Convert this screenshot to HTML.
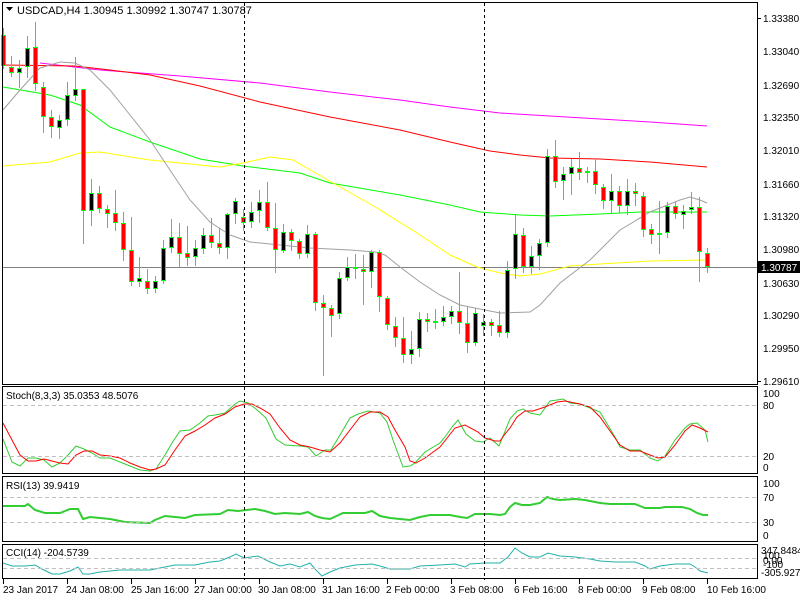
<!DOCTYPE html>
<html><head><meta charset="utf-8"><style>
html,body{margin:0;padding:0;background:#fff;width:800px;height:600px;overflow:hidden}
svg{display:block}
text{font-family:"Liberation Sans",sans-serif;font-size:10px;fill:#000}
</style></head><body>
<svg id="s" width="800" height="600" viewBox="0 0 800 600" xmlns="http://www.w3.org/2000/svg">
<rect width="800" height="600" fill="#fff"/>
<g id="g"></g>
<!-- panel borders -->
<g fill="none" stroke="#000" stroke-width="1">
<rect x="2.5" y="2.5" width="755" height="382"/>
<rect x="2.5" y="386.5" width="755" height="87"/>
<rect x="2.5" y="476.5" width="755" height="65"/>
<rect x="2.5" y="544.5" width="755" height="34"/>
</g>
<!-- dashed levels -->
<g stroke="#c0c0c0" stroke-dasharray="4,3" stroke-width="1">
<line x1="3" y1="405.5" x2="757" y2="405.5"/><line x1="3" y1="456.5" x2="757" y2="456.5"/>
<line x1="3" y1="497.5" x2="757" y2="497.5"/><line x1="3" y1="522.5" x2="757" y2="522.5"/>
<line x1="3" y1="558.5" x2="757" y2="558.5"/><line x1="3" y1="568.5" x2="757" y2="568.5"/>
</g>
<!-- vertical separators -->
<g stroke="#000" stroke-dasharray="3,3" stroke-width="1">
<line x1="244.5" y1="3" x2="244.5" y2="580"/><line x1="484.5" y1="3" x2="484.5" y2="580"/>
</g>
<!-- right axis labels -->
<g>
<text x="763" y="22">1.33380</text><text x="763" y="55">1.33040</text><text x="763" y="89">1.32690</text>
<text x="763" y="121">1.32350</text><text x="763" y="154">1.32010</text><text x="763" y="188">1.31660</text>
<text x="763" y="220">1.31320</text><text x="763" y="253">1.30980</text><text x="763" y="287">1.30630</text>
<text x="763" y="319">1.30290</text><text x="763" y="352">1.29950</text><text x="763" y="385">1.29610</text>
<text x="763" y="397">100</text><text x="763" y="409">80</text><text x="763" y="460">20</text><text x="763" y="471">0</text>
<text x="763" y="487">100</text><text x="763" y="501">70</text><text x="763" y="526">30</text><text x="763" y="539">0</text>
<text x="761" y="554">347.8484</text><text x="763" y="559">100</text><text x="763" y="564">0.00</text><text x="763" y="568">-100</text><text x="761" y="576">-305.9279</text>
</g>
<g stroke="#000"><line x1="757" y1="18.5" x2="761" y2="18.5"/><line x1="757" y1="381.5" x2="761" y2="381.5"/></g>
<rect x="758" y="261" width="42" height="12" fill="#000"/>
<text x="761" y="271" style="fill:#fff">1.30787</text>
<!-- bottom axis -->
<g stroke="#000"><line x1="3.5" y1="579" x2="3.5" y2="584"/><line x1="67.5" y1="579" x2="67.5" y2="584"/><line x1="131.5" y1="579" x2="131.5" y2="584"/><line x1="195.5" y1="579" x2="195.5" y2="584"/><line x1="259.5" y1="579" x2="259.5" y2="584"/><line x1="323.5" y1="579" x2="323.5" y2="584"/><line x1="387.5" y1="579" x2="387.5" y2="584"/><line x1="451.5" y1="579" x2="451.5" y2="584"/><line x1="515.5" y1="579" x2="515.5" y2="584"/><line x1="579.5" y1="579" x2="579.5" y2="584"/><line x1="643.5" y1="579" x2="643.5" y2="584"/><line x1="707.5" y1="579" x2="707.5" y2="584"/></g>
<g>
<text x="3" y="593">23 Jan 2017</text><text x="66" y="593">24 Jan 08:00</text><text x="131" y="593">25 Jan 16:00</text>
<text x="194" y="593">27 Jan 00:00</text><text x="258" y="593">30 Jan 08:00</text><text x="322" y="593">31 Jan 16:00</text>
<text x="386" y="593">2 Feb 00:00</text><text x="450" y="593">3 Feb 08:00</text><text x="514" y="593">6 Feb 16:00</text>
<text x="578" y="593">8 Feb 00:00</text><text x="642" y="593">9 Feb 08:00</text><text x="707" y="593">10 Feb 16:00</text>
</g>
<!-- titles -->
<polygon points="6,7 13,7 9.5,11" fill="#000"/>
<text x="17" y="14" style="font-size:11px">USDCAD,H4  1.30945 1.30992 1.30747 1.30787</text>
<text x="6" y="399" style="font-size:10px">Stoch(8,3,3) 35.0353 48.5076</text>
<text x="6" y="489" style="font-size:10px">RSI(13) 39.9419</text>
<text x="6" y="556" style="font-size:10px">CCI(14) -204.5739</text>
</svg>
<script>
var g=document.getElementById('g'),NS='http://www.w3.org/2000/svg';
function pl(pts,col,w){var p=document.createElementNS(NS,'polyline');p.setAttribute('points',pts.map(function(a){return a.join(',')}).join(' '));p.setAttribute('fill','none');p.setAttribute('stroke',col);p.setAttribute('stroke-width',w);g.appendChild(p);}
function el(n,a){var e=document.createElementNS(NS,n);for(var k in a)e.setAttribute(k,a[k]);g.appendChild(e);return e;}
el('line',{x1:3,y1:267.5,x2:757,y2:267.5,stroke:'#808080','stroke-width':1});
pl([[40,63],[100,70],[180,76],[260,83],[330,92],[400,100],[450,107],[500,113],[550,116],[600,119],[650,122],[707,126]],'#ff00ff',1);
pl([[3,65],[75,66],[110,70],[150,75],[200,86],[260,102],[330,117],[400,130],[450,142],[490,151],[520,155],[550,158],[600,159],[650,162],[707,167]],'#ff0000',1);
pl([[3,87],[50,95],[80,105],[110,127],[150,142],[200,159],[243,166],[300,173],[330,183],[400,195],[450,205],[480,212],[520,215],[550,216],[600,214],[640,212],[707,212]],'#00ff00',1);
pl([[3,166],[50,162],[80,153],[100,152],[150,160],[220,167],[243,163],[270,157],[293,160],[333,183],[377,208],[417,233],[450,255],[477,267],[500,273],[520,276],[540,274],[570,266],[600,264],[650,261],[707,260]],'#ffff00',1);
pl([[3,110],[20,90],[40,68],[60,62],[75,63],[90,70],[110,90],[130,115],[150,140],[170,170],[190,200],[210,222],[230,235],[250,242],[280,245],[310,248],[350,250],[375,252],[385,255],[400,267],[420,282],[440,295],[460,305],[480,309],[500,313],[530,312],[540,305],[560,283],[590,260],[620,230],[650,212],[680,200],[690,197],[700,200],[707,203]],'#a0a0a0',1);
var C=[['r',35,66,28,68],['r',67,73,56,76],['b',68,73,60,87],['b',48,67,36,77],['r',47,84,22,90],['r',87,117,82,132],['r',117,127,110,137],['b',120,128,115,138],['b',95,120,82,125],['b',89,96,57,100],
['r',89,211,89,243],['b',193,211,179,225],['r',193,209,186,212],['r',209,214,205,227],['r',213,223,190,230],['r',223,250,212,260],['r',250,282,217,285],['b',278,282,257,286],['r',281,289,269,293],['b',281,289,276,292],
['b',248,281,240,283],['b',237,248,219,252],['r',237,254,223,267],['r',253,258,226,265],['b',248,257,240,265],['b',235,249,228,253],['r',235,243,218,247],['r',243,248,228,253],['b',214,248,213,258],['b',201,214,198,223],
['r',217,223,209,230],['b',212,222,202,227],['b',202,211,190,222],['r',202,228,182,230],['r',228,250,203,272],['b',232,251,224,252],['r',232,241,229,250],['r',241,254,239,258],['b',234,254,225,257],['r',234,303,232,310],
['r',303,308,295,375],['r',308,316,305,336],['b',278,314,272,318],['b',267,278,257,280],['r',267,269,254,278],['r',269,272,255,304],['b',252,272,250,287],['r',252,297,250,311],['r',298,325,296,329],['r',326,338,317,346],
['r',338,355,317,362],['b',349,355,331,363],['b',319,349,312,356],['r',319,322,313,331],['b',321,322,309,328],['b',317,322,306,325],['b',311,317,306,323],['r',311,323,272,333],['r',323,343,307,352],['b',313,343,308,345],
['b',322,326,314,335],['r',322,326,319,335],['r',325,333,311,336],['b',270,333,261,337],['b',234,269,214,278],['r',235,267,228,272],['b',256,267,246,273],['b',243,256,239,269],['b',156,243,149,246],['r',156,182,140,187],
['b',174,181,167,199],['b',167,174,159,194],['r',168,173,152,179],['b',171,172,167,182],['r',171,185,159,193],['r',187,201,184,208],['b',191,201,174,212],['r',191,206,186,212],['b',191,206,179,214],['r',191,194,183,205],
['r',196,230,192,236],['r',229,235,224,243],['b',233,235,201,253],['b',206,233,202,237],['r',206,214,202,218],['b',211,215,205,228],['b',207,210,192,213],['r',207,252,197,281],['r',253,267,248,272]];
C.forEach(function(c,k){var x=3+8*k;
el('line',{x1:x+0.5,y1:c[3],x2:x+0.5,y2:c[4]+1,stroke:'#00ff00','stroke-width':1});
var h=c[2]-c[1];if(h<2){el('rect',{x:x-2,y:c[1],width:5,height:2,fill:'#00ff00'});}
else el('rect',{x:x-1.5,y:c[1]+0.5,width:4,height:h-1,fill:c[0]=='r'?'#ff0000':'#000',stroke:'#00ff00','stroke-width':1});});
pl([[3,439],[12,462],[20,466],[28,458],[36,458],[44,460],[52,467],[60,463],[68,455],[76,446],[84,449],[92,453],[100,458],[110,458],[120,462],[130,466],[140,470],[150,471],[156,469],[165,455],[172,443],[180,431],[190,430],[200,423],[208,416],[215,415],[225,413],[235,404],[240,401],[248,403],[256,409],[266,418],[276,439],[285,445],[300,446],[308,447],[316,456],[325,450],[331,450],[340,435],[350,418],[358,414],[368,411],[380,413],[387,422],[393,440],[403,467],[410,466],[415,463],[425,452],[440,443],[445,437],[452,427],[458,420],[466,434],[475,441],[483,442],[490,438],[499,446],[510,419],[517,411],[523,409],[530,413],[540,415],[550,401],[557,400],[563,399],[570,403],[580,404],[590,408],[600,412],[615,437],[620,447],[630,450],[640,450],[650,458],[658,461],[665,456],[675,440],[685,428],[690,424],[697,423],[705,430],[708,442]],'#32cd32',1);
pl([[3,423],[12,440],[20,455],[28,461],[36,461],[44,459],[52,461],[60,463],[68,464],[76,455],[84,451],[92,451],[100,455],[110,456],[120,458],[130,463],[140,467],[150,470],[156,469],[165,465],[175,450],[185,436],[195,431],[205,425],[215,418],[225,414],[235,407],[244,404],[252,404],[260,408],[270,414],[280,428],[290,440],[300,445],[310,447],[320,450],[330,452],[340,443],[350,430],[360,417],[370,412],[380,412],[388,417],[395,430],[405,447],[410,461],[416,463],[425,458],[440,447],[455,428],[465,425],[478,432],[485,438],[495,441],[500,441],[505,434],[510,428],[517,417],[525,411],[533,411],[545,407],[557,402],[565,401],[580,404],[590,407],[600,417],[610,431],[620,445],[630,451],[640,451],[650,455],[658,458],[665,457],[675,445],[685,431],[692,425],[700,428],[708,432]],'#ff0000',1);
pl([[3,506],[25,506],[28,504],[35,510],[45,513],[60,513],[70,509],[78,509],[83,519],[90,517],[110,519],[125,522],[150,523],[155,520],[165,516],[175,517],[185,518],[195,515],[220,514],[228,510],[238,511],[255,509],[265,511],[275,514],[285,513],[300,514],[308,512],[315,516],[322,518],[330,519],[343,513],[365,513],[372,511],[380,516],[390,518],[400,519],[410,520],[420,517],[430,515],[450,515],[460,517],[467,518],[475,514],[490,514],[500,515],[505,514],[510,507],[515,503],[522,505],[530,505],[540,503],[547,497],[553,499],[560,500],[575,499],[585,500],[600,503],[610,504],[618,504],[635,504],[640,506],[645,508],[660,508],[665,507],[682,507],[690,509],[697,513],[703,515],[708,515]],'#32cd32',2);
pl([[3,563],[12,566],[25,566],[35,565],[42,569],[52,574],[60,574],[70,571],[78,567],[83,574],[90,574],[100,572],[120,570],[150,570],[165,567],[175,565],[195,565],[210,562],[220,561],[230,557],[236,554],[244,558],[258,556],[270,562],[280,566],[290,564],[300,567],[310,563],[315,569],[322,576],[330,572],[340,568],[355,565],[372,564],[380,566],[390,569],[410,569],[420,566],[440,565],[455,564],[465,567],[470,564],[485,563],[500,563],[508,557],[515,548],[522,553],[530,557],[540,557],[548,553],[560,556],[575,557],[590,559],[600,561],[615,562],[635,562],[645,566],[650,569],[660,566],[675,564],[690,564],[695,567],[700,571],[708,573]],'#20b2aa',1);
</script>
</body></html>
